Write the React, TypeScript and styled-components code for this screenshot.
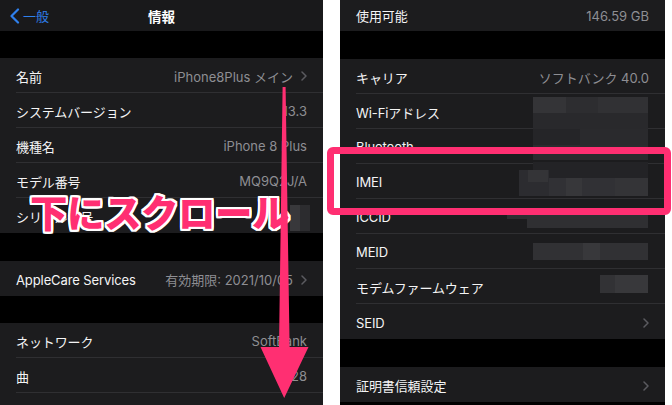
import React from 'react'
import styled, { createGlobalStyle } from 'styled-components'

const PINK = '#ff2f72'

const GlobalStyle = createGlobalStyle`
  html, body {
    margin: 0;
    padding: 0;
    background: #fff;
  }
`

type Item = { label: string; value?: string; chevron?: boolean }

const leftGroups: { gap: number; rows: Item[] }[] = [
  {
    gap: 27,
    rows: [
      { label: '名前', value: 'iPhone8Plus メイン', chevron: true },
      { label: 'システムバージョン', value: '13.3' },
      { label: '機種名', value: 'iPhone 8 Plus' },
      { label: 'モデル番号', value: 'MQ9Q2J/A' },
      { label: 'シリアル番号' },
    ],
  },
  {
    gap: 28,
    rows: [{ label: 'AppleCare Services', value: '有効期限: 2021/10/05', chevron: true }],
  },
  {
    gap: 27,
    rows: [
      { label: 'ネットワーク', value: 'SoftBank' },
      { label: '曲', value: '28' },
      { label: '' },
    ],
  },
]

const rightGroups: { gap: number; rows: Item[] }[] = [
  {
    gap: 28,
    rows: [
      { label: 'キャリア', value: 'ソフトバンク 40.0' },
      { label: 'Wi-Fiアドレス' },
      { label: 'Bluetooth' },
      { label: 'IMEI' },
      { label: 'ICCID' },
      { label: 'MEID' },
      { label: 'モデムファームウェア' },
      { label: 'SEID', chevron: true },
    ],
  },
  {
    gap: 28,
    rows: [{ label: '証明書信頼設定', chevron: true }],
  },
]

// pixelated (censored) patches, in page coordinates
const mosaic: [number, number, number, number, string][] = [
  [533, 97, 33, 16, '#343437'],
  [566, 97, 32, 16, '#2d2d30'],
  [598, 97, 50, 16, '#313134'],
  [533, 113, 115, 16, '#29292c'],
  [533, 129, 47, 16, '#252528'],
  [580, 129, 68, 16, '#2a2a2d'],
  [533, 145, 115, 15, '#2b2b2e'],
  [533, 162, 115, 16, '#232326'],
  [519, 170, 30, 26, '#2c2c30'],
  [528, 170, 20, 12, '#343437'],
  [549, 178, 99, 18, '#313135'],
  [566, 178, 16, 18, '#37373a'],
  [615, 178, 33, 18, '#343437'],
  [507, 208, 41, 11, '#2e2e31'],
  [527, 215, 121, 13, '#2f2f32'],
  [533, 243, 115, 17, '#313134'],
  [583, 243, 17, 17, '#38383b'],
  [600, 275, 48, 18, '#323235'],
  [615, 275, 33, 18, '#38383b'],
  [290, 205, 10, 26, '#38383b'],
  [300, 205, 10, 26, '#2c2c2f'],
]

export default function App() {
  return (
    <>
      <GlobalStyle />
      <Page>
        <Screen $width={323}>
          <NavBar>
            <BackButton>
              <svg width="11" height="16" viewBox="0 0 11 16">
                <path d="M9 1.5 L2.5 8 L9 14.5" fill="none" stroke="#2f80ed" strokeWidth="2.2" strokeLinecap="round" strokeLinejoin="round" />
              </svg>
              一般
            </BackButton>
            <NavTitle>情報</NavTitle>
            <span />
          </NavBar>
          {leftGroups.map((g, i) => (
            <React.Fragment key={i}>
              <Spacer $height={g.gap} />
              <Group>
                {g.rows.map((r, j) => (
                  <SettingRow key={j} item={r} />
                ))}
              </Group>
            </React.Fragment>
          ))}
        </Screen>

        <Screen $width={325}>
          <Group>
            <SettingRow item={{ label: '使用可能', value: '146.59 GB' }} height={31} top={0} />
          </Group>
          {rightGroups.map((g, i) => (
            <React.Fragment key={i}>
              <Spacer $height={g.gap} />
              <Group>
                {g.rows.map((r, j) => (
                  <SettingRow key={j} item={r} />
                ))}
              </Group>
            </React.Fragment>
          ))}
        </Screen>

        <Mosaic width="672" height="405" viewBox="0 0 672 405">
          {mosaic.map(([x, y, w, h, c], i) => (
            <rect key={i} x={x} y={y} width={w} height={h} fill={c} />
          ))}
        </Mosaic>

        <HighlightBox />

        <Caption>下にスクロール</Caption>

        <Arrow width="672" height="405" viewBox="0 0 672 405">
          <polygon
            points="282.6,87 285.6,87 289.6,347 308.5,347 284.2,398 260.5,347 279,347"
            fill={PINK}
          />
        </Arrow>
      </Page>
    </>
  )
}

function SettingRow({ item, height = 35, top = 2 }: { item: Item; height?: number; top?: number }) {
  return (
    <Row $height={height}>
      <RowInner $top={top}>
        <Label>{item.label}</Label>
        <Value>
          {item.value}
          {item.chevron && (
            <svg width="6" height="10" viewBox="0 0 6 10">
              <path d="M1 1 L5 5 L1 9" fill="none" stroke="#5b5b60" strokeWidth="1.5" strokeLinecap="round" strokeLinejoin="round" />
            </svg>
          )}
        </Value>
      </RowInner>
    </Row>
  )
}

const Page = styled.div`
  position: relative;
  display: flex;
  gap: 17px;
  width: 672px;
  height: 405px;
  overflow: hidden;
  background: #fff;
  font-family: Inter, 'Noto Sans CJK JP', sans-serif;
`

const Screen = styled.div<{ $width: number }>`
  width: ${({ $width }) => $width}px;
  flex-shrink: 0;
  height: 100%;
  background: #000;
  display: flex;
  flex-direction: column;
  overflow: hidden;
`

const NavBar = styled.div`
  height: 31px;
  flex-shrink: 0;
  background: #19191b;
  display: grid;
  grid-template-columns: 1fr auto 1fr;
  align-items: center;
`

const BackButton = styled.div`
  display: flex;
  align-items: center;
  gap: 3px;
  padding-left: 9px;
  color: #2f80ed;
  font-size: 13px;
`

const NavTitle = styled.div`
  color: #fff;
  font-size: 13.5px;
  font-weight: 700;
`

const Spacer = styled.div<{ $height: number }>`
  height: ${({ $height }) => $height}px;
  flex-shrink: 0;
`

const Group = styled.div`
  background: #1c1c1e;
  flex-shrink: 0;
`

const Row = styled.div<{ $height: number }>`
  height: ${({ $height }) => $height}px;
  padding-left: 16px;
  display: flex;
  &:last-child > div {
    border-bottom: none;
  }
`

const RowInner = styled.div<{ $top: number }>`
  flex: 1;
  display: flex;
  align-items: center;
  justify-content: space-between;
  padding: ${({ $top }) => $top}px 16px 0 0;
  border-bottom: 1px solid #2f2f32;
`

const Label = styled.span`
  color: #f4f4f5;
  font-size: 13px;
  letter-spacing: -0.1px;
  white-space: nowrap;
`

const Value = styled.span`
  display: flex;
  align-items: center;
  gap: 8px;
  color: #8e8e93;
  font-size: 13px;
  white-space: nowrap;
`

const Mosaic = styled.svg`
  position: absolute;
  left: 0;
  top: 0;
`

const HighlightBox = styled.div`
  position: absolute;
  left: 327px;
  top: 147px;
  width: 344px;
  height: 68px;
  box-sizing: border-box;
  border: 7px solid ${PINK};
  border-radius: 6px;
`

const Caption = styled.div`
  position: absolute;
  left: 30px;
  top: 189px;
  color: ${PINK};
  font-family: 'Noto Sans CJK JP', sans-serif;
  font-size: 37.5px;
  font-weight: 900;
  line-height: 44px;
  letter-spacing: -0.5px;
  white-space: nowrap;
  text-shadow:
    2px 0 0 #fff, -2px 0 0 #fff, 0 2px 0 #fff, 0 -2px 0 #fff,
    2px 2px 0 #fff, -2px 2px 0 #fff, 2px -2px 0 #fff, -2px -2px 0 #fff,
    1px 2px 0 #fff, 2px 1px 0 #fff, -1px 2px 0 #fff, -2px 1px 0 #fff,
    1px -2px 0 #fff, 2px -1px 0 #fff, -1px -2px 0 #fff, -2px -1px 0 #fff;
`

const Arrow = styled.svg`
  position: absolute;
  left: 0;
  top: 0;
  pointer-events: none;
`
